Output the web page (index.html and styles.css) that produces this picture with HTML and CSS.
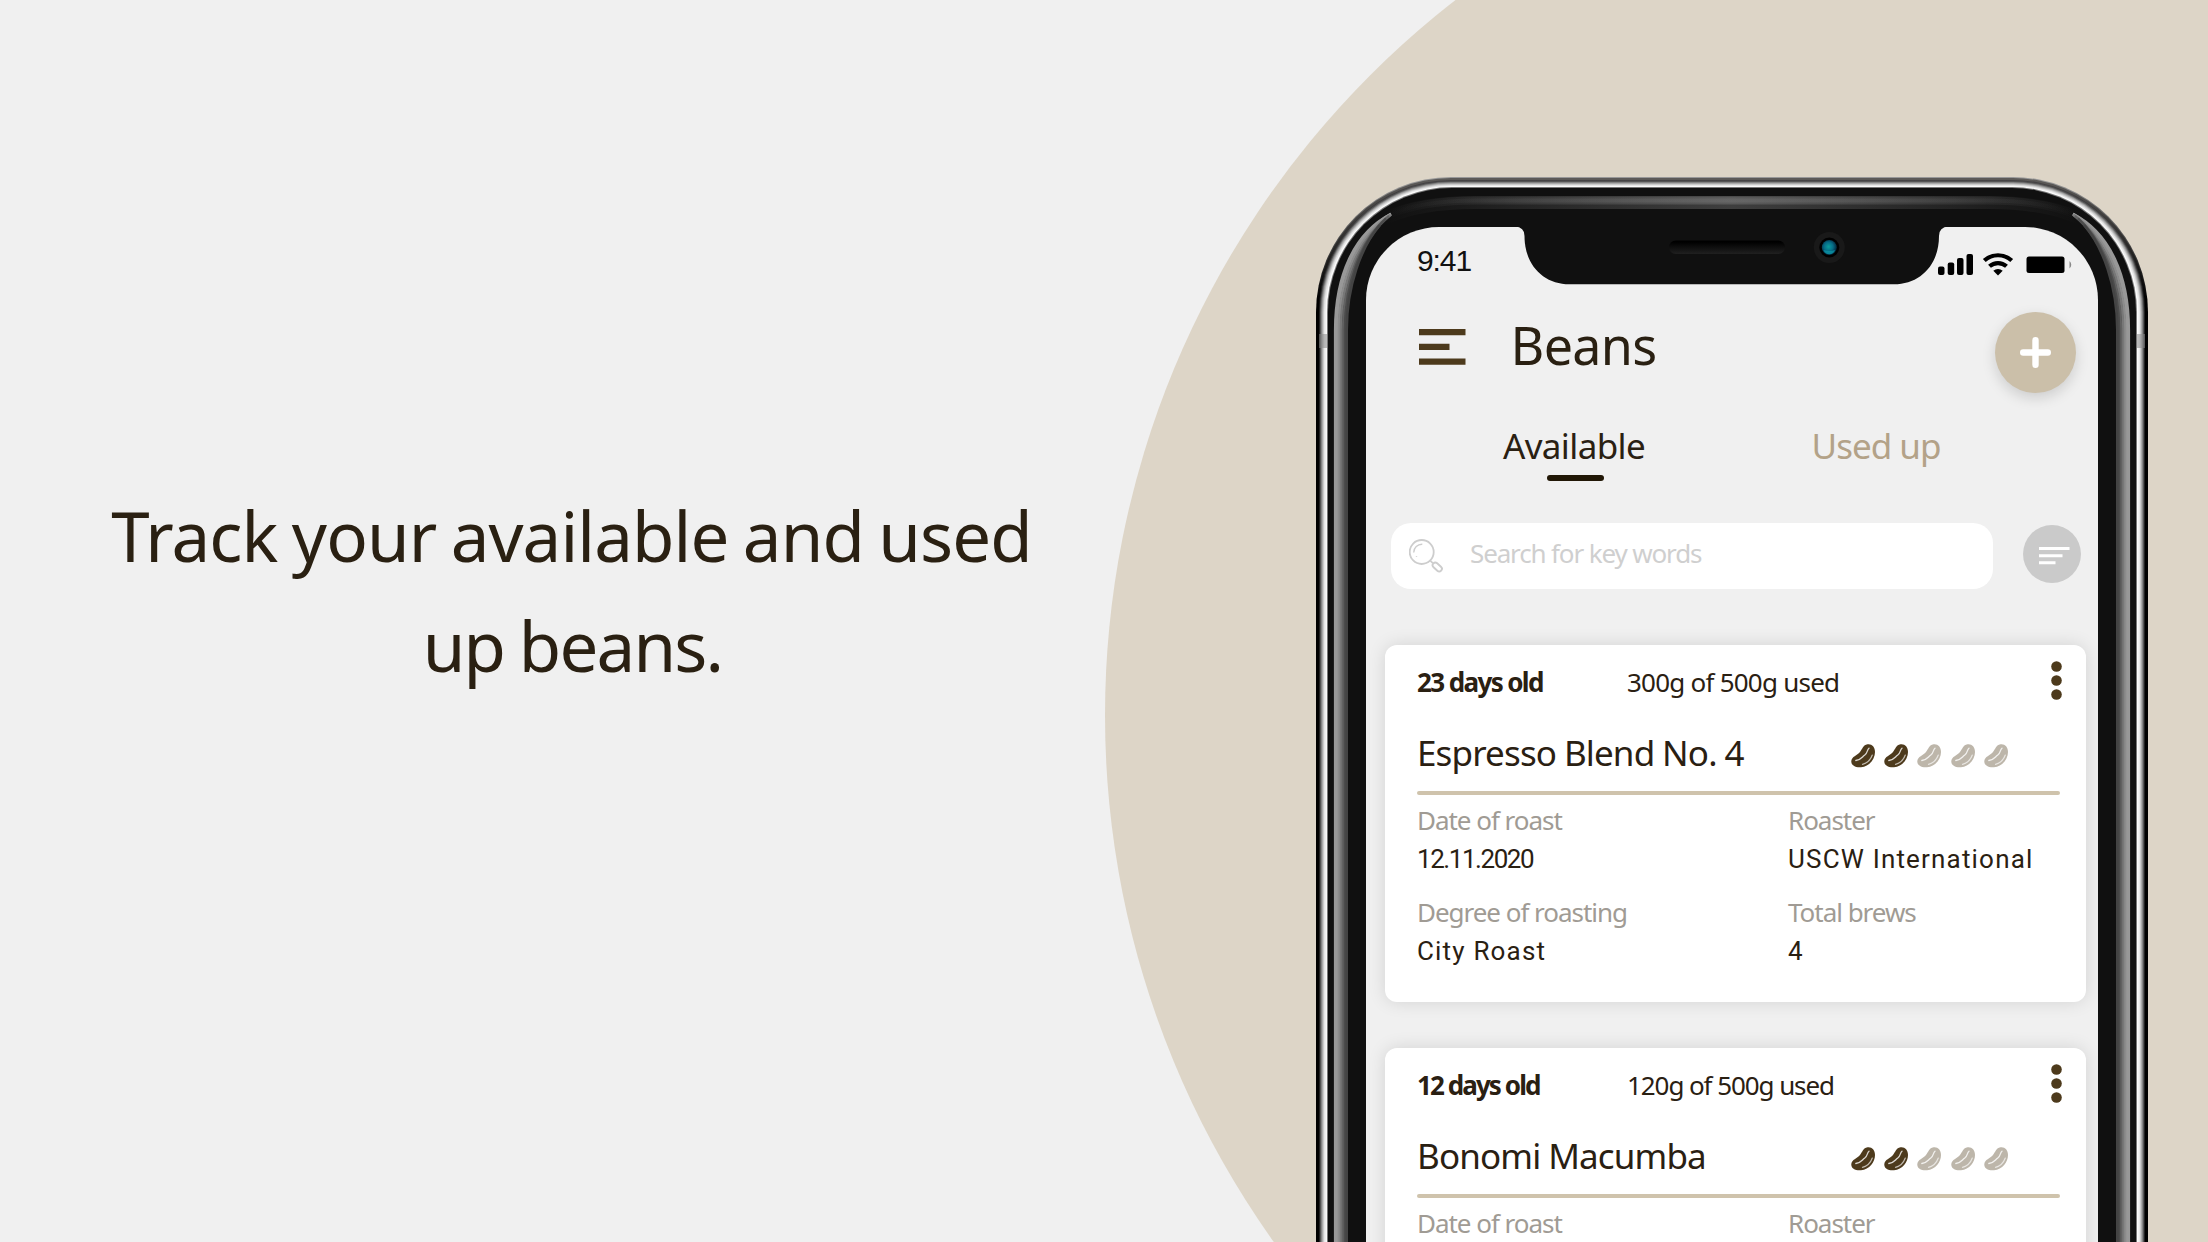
FILE: index.html
```
<!DOCTYPE html>
<html lang="en">
<head>
<meta charset="utf-8">
<title>Beans</title>
<link rel="stylesheet" href="styles.css">
</head>
<body>
<svg class="defs" width="0" height="0" aria-hidden="true">
  <symbol id="bean" viewBox="0 0 24 24">
    <path fill="currentColor" d="M16.500.3C20.500-.4 24 2.500 24 8c0 7-5.500 14.500-14 15.300C4 23.800 0 21 .3 17 .8 12.500 6 11.500 9 8c2.500-3 3-7 7.500-7.700z"/>
    <path fill="none" stroke="#fff" stroke-opacity=".8" stroke-width="1.300" stroke-linecap="round" d="M18 4.200c-2.200 1.600-1.200 4.800-4.200 6.800s-3 4.500-9 5.500"/>
    <path fill="none" stroke="#fff" stroke-opacity=".65" stroke-width="1.200" stroke-linecap="round" d="M21.300 11c-1.600 4.400-4.800 8-9.800 9.400"/>
  </symbol>
  <symbol id="dots" viewBox="0 0 11 39">
    <g fill="#4d3a1c"><circle cx="5.500" cy="5.500" r="5.300"/><circle cx="5.500" cy="19.500" r="5.300"/><circle cx="5.500" cy="33.500" r="5.300"/></g>
  </symbol>
</svg>

<main class="stage">
  <div class="backdrop"></div>
  <h1 class="headline"><span class="line first">Track your available and used</span><span class="line second">up beans.</span></h1>

  <section class="phone">
    <svg class="frame" width="832" height="1065" viewBox="1316 177 832 1065">
      <defs>
        <linearGradient id="e0" gradientUnits="userSpaceOnUse" x1="0" y1="180" x2="0" y2="300"><stop stop-color="#999"/><stop offset="1" stop-color="#000"/></linearGradient>
        <linearGradient id="e1" gradientUnits="userSpaceOnUse" x1="0" y1="180" x2="0" y2="300"><stop stop-color="#5c5a58"/><stop offset="1" stop-color="#000"/></linearGradient>
        <linearGradient id="e3" gradientUnits="userSpaceOnUse" x1="0" y1="180" x2="0" y2="300"><stop stop-color="#454345"/><stop offset="1" stop-color="#222"/></linearGradient>
        <linearGradient id="topSheen" gradientUnits="userSpaceOnUse" x1="1385" y1="0" x2="2079" y2="0"><stop stop-color="#777" stop-opacity="0"/><stop offset=".18" stop-color="#777" stop-opacity=".4"/><stop offset=".5" stop-color="#777"/><stop offset=".82" stop-color="#777" stop-opacity=".4"/><stop offset="1" stop-color="#777" stop-opacity="0"/></linearGradient>
        <g id="sideSheen" fill="none" stroke-width="2.600">
          <path stroke="#999" d="M1391 214C1354 233 1335.200 276 1335.200 330V1250"/>
          <path stroke="#989898" d="M1391 214C1356 234 1337 277 1337 330V1250"/>
          <path stroke="#8c8c8c" d="M1391 214.500C1358 235 1339 278 1339 330V1250"/>
          <path stroke="#787878" d="M1390.500 215C1360 237 1341 279 1341 330V1250"/>
          <path stroke="#626262" d="M1389 216C1361 239 1343 281 1343 330V1250"/>
          <path stroke="#4c4c4c" d="M1386 218.500C1361 242 1345 283 1345 330V1250"/>
          <path stroke="#444" d="M1380 225C1361 247 1346.700 286 1346.700 330V1250"/>
        </g>
      </defs>
      <rect x="1316" y="177" width="832" height="1400" rx="135" fill="url(#e0)"/>
      <rect x="1317" y="178" width="830" height="1400" rx="134" fill="url(#e1)"/>
      <rect x="1319" y="180" width="826" height="1400" rx="132" fill="url(#e3)"/>
      <rect x="1320" y="181" width="824" height="1400" rx="131" fill="#555"/>
      <rect x="1321" y="182" width="822" height="1400" rx="130" fill="#848484"/>
      <rect x="1322" y="183" width="820" height="1400" rx="129" fill="#aaa"/>
      <rect x="1323" y="184" width="818" height="1400" rx="128" fill="#ccc"/>
      <rect x="1324" y="185" width="816" height="1400" rx="127" fill="#e8e8e8"/>
      <rect x="1325.500" y="186" width="813" height="1400" rx="126" fill="#fafafa"/>
      <rect x="1327" y="187" width="810" height="1400" rx="125" fill="#777"/>
      <rect x="1328" y="188" width="808" height="1400" rx="124" fill="#101010"/>
      <path d="M1319 334h8v14h-8zM2137 334h8v14h-8z" fill="#888" opacity=".55"/>
      <g fill="none" stroke="url(#topSheen)">
        <path stroke-width="13" opacity=".45" d="M1385 218Q1420 202.500 1475 202.500H1989Q2044 202.500 2079 218"/>
        <path stroke-width="8" opacity=".5" d="M1385 216Q1420 200.500 1475 200.500H1989Q2044 200.500 2079 216"/>
        <path stroke-width="4" opacity=".4" d="M1385 216Q1420 200.500 1475 200.500H1989Q2044 200.500 2079 216"/>
      </g>
      <use href="#sideSheen"/>
      <use href="#sideSheen" transform="translate(3464 0) scale(-1 1)"/>
    </svg>

    <div class="screen">
      <div class="status">
        <span class="time">9:41</span>
        <svg width="134" height="24" viewBox="0 0 134 24">
          <rect x="0" y="14.500" width="6.500" height="8.500" rx="2"/><rect x="9.700" y="10.500" width="6.500" height="12.500" rx="2"/><rect x="19" y="6" width="6.500" height="17" rx="2"/><rect x="28.500" y="2" width="6.500" height="21" rx="2"/>
          <g fill="none" stroke="#000" stroke-width="4.200"><path d="M46.300 8.500a20.500 20.500 0 0 1 27.400 0"/><path d="M51.500 14.300a12.700 12.700 0 0 1 17 0"/></g>
          <path d="M55.300 18.700a7 7 0 0 1 9.400 0L60 23.400z"/>
          <rect x="88.500" y="4.500" width="38" height="16.500" rx="2.500"/>
          <path fill="#888" d="M131.500 9q3.500 3.500 0 7.500z"/>
        </svg>
      </div>

      <header class="topbar">
        <svg class="burger" width="47" height="37" viewBox="0 0 47 37"><path fill="#4d3a1c" d="M0 0h46.500v6.300H0zM0 14.700h30.500V21H0zM0 29.500h46.500v6.300H0z"/></svg>
        <h2>Beans</h2>
        <button class="add"><svg width="31" height="31" viewBox="0 0 31 31"><path d="M15.500 3.200v24.600M3.200 15.500h24.600" stroke="#fff" stroke-width="6.400" stroke-linecap="round"/></svg></button>
      </header>

      <nav class="tabs">
        <a class="tab active">Available</a>
        <a class="tab">Used up</a>
      </nav>

      <div class="search">
        <div class="field">
          <svg width="34" height="34" viewBox="0 0 34 34" fill="none" stroke="#cdcdcd"><circle cx="12.700" cy="13" r="12" stroke-width="1.800"/><path stroke-width="1.400" d="M4.700 13.500a8.300 8.300 0 0 1 8.600-8.300M7.500 17v.8"/><path stroke-width="1.700" d="M21.300 21.700l2.500 2.500"/><rect x="23" y="25.300" width="10.500" height="5.400" rx="2.700" transform="rotate(42 28.250 28)" stroke-width="1.900"/></svg>
          <span>Search for key words</span>
        </div>
        <button class="filter"><svg width="31" height="18" viewBox="0 0 31 18"><path fill="#fff" d="M0 0h30.500v3H0zM0 7.200h23.500v3H0zM0 14.200h16.500v3H0z"/></svg></button>
      </div>

      <div class="cards">
        <article class="card">
          <div class="meta"><b>23 days old</b><span>300g of 500g used</span><svg class="more" width="11" height="39"><use href="#dots"/></svg></div>
          <div class="name"><h3>Espresso Blend No. 4</h3>
            <div class="rating"><svg class="on"><use href="#bean"/></svg><svg class="on"><use href="#bean"/></svg><svg><use href="#bean"/></svg><svg><use href="#bean"/></svg><svg><use href="#bean"/></svg></div>
          </div>
          <dl class="facts">
            <div><dt>Date of roast</dt><dd class="date">12.11.2020</dd></div>
            <div><dt>Roaster</dt><dd>USCW International</dd></div>
            <div><dt>Degree of roasting</dt><dd>City Roast</dd></div>
            <div><dt>Total brews</dt><dd>4</dd></div>
          </dl>
        </article>
        <article class="card">
          <div class="meta"><b class="tight">12 days old</b><span class="tight">120g of 500g used</span><svg class="more" width="11" height="39"><use href="#dots"/></svg></div>
          <div class="name"><h3>Bonomi Macumba</h3>
            <div class="rating"><svg class="on"><use href="#bean"/></svg><svg class="on"><use href="#bean"/></svg><svg><use href="#bean"/></svg><svg><use href="#bean"/></svg><svg><use href="#bean"/></svg></div>
          </div>
          <dl class="facts">
            <div><dt>Date of roast</dt></div>
            <div><dt>Roaster</dt></div>
          </dl>
        </article>
      </div>
    </div>

    <svg class="notch" width="832" height="120" viewBox="1316 177 832 120">
      <defs>
        <linearGradient id="spk" x1="0" y1="0" x2="0" y2="1"><stop offset=".1" stop-color="#000"/><stop offset="1" stop-color="#202020"/></linearGradient>
        <radialGradient id="lens" cx=".45" cy=".45" r=".6"><stop stop-color="#0a9c9c"/><stop offset=".5" stop-color="#066b86"/><stop offset="1" stop-color="#03182c"/></radialGradient>
      </defs>
      <path fill="#101010" d="M1515 226.500q9.500.5 9.500 9.500c0 29 19 48.300 45 48.300H1894c26 0 45-19.300 45-48.300q0-9 9.500-9.500z"/>
      <rect x="1669" y="240.500" width="116" height="13.500" rx="6.700" fill="url(#spk)"/>
      <circle cx="1829.300" cy="247.500" r="15.500" fill="#191919"/>
      <circle cx="1829.300" cy="247.500" r="10" fill="#000"/>
      <circle cx="1829.300" cy="247.500" r="7.500" fill="url(#lens)"/>
      <path d="M1823.500 250q6 2 11.500 0-1 4-5.800 4.300-4.500-.3-5.700-4.300z" fill="#0b94a6" opacity=".8"/>
    </svg>
  </section>
</main>
</body>
</html>
```
FILE: styles.css
```
* { box-sizing: border-box; margin: 0; padding: 0; }

body {
  width: 2208px;
  height: 1242px;
  overflow: hidden;
  background: #f0f0f0;
  color: #2a2012;
  font-family: "Noto Sans", sans-serif;
}

.defs { position: absolute; }

.stage {
  position: relative;
  display: flex;
  width: 2208px;
  height: 1242px;
  overflow: hidden;
}

.backdrop {
  position: absolute;
  left: 1104.5px;
  top: -190.5px;
  width: 1811px;
  height: 1811px;
  border-radius: 50%;
  background: #ddd5c7;
}

.headline {
  position: relative;
  width: 1140px;
  padding: 480px 0 0 3px;
  font-size: 69px;
  font-weight: 400;
  line-height: 110px;
  text-align: center;
  white-space: nowrap;
}
.line { display: block; }
.first { letter-spacing: -.9px; word-spacing: -2.7px; }
.second { padding-left: 2px; letter-spacing: -1.8px; word-spacing: -1.5px; }

/* Phone */
.phone {
  position: relative;
  flex: none;
  width: 832px;
  height: 1065px;
  margin: 177px 0 0 176px;
  padding: 50px 50px 0;
}
.frame, .notch { position: absolute; left: 0; top: 0; }

.screen {
  position: relative;
  height: 1015px;
  overflow: hidden;
  border-radius: 73px 73px 0 0;
  background: #f0f0f0;
}

.status {
  display: flex;
  justify-content: space-between;
  height: 57px;
  padding: 0 26px 0 51px;
}
.status svg { margin-top: 25px; }
.time {
  color: #111;
  font: 30px/67px "Liberation Sans", sans-serif;
  letter-spacing: -1.1px;
}

.topbar {
  display: flex;
  align-items: flex-start;
  margin-top: 28px;
  padding: 0 22px 0 53px;
}
.burger { margin-top: 17px; }
.topbar h2 {
  flex: 1;
  margin: 3px 0 0 44.5px;
  font-size: 52px;
  font-weight: 400;
  line-height: 60px;
  letter-spacing: -.65px;
}
button { display: flex; border: 0; border-radius: 50%; }
.add {
  width: 81px;
  height: 81px;
  align-items: center;
  justify-content: center;
  background: #cbbfa9;
  box-shadow: 0 5px 14px rgba(0, 0, 0, .15);
}

.tabs {
  display: grid;
  grid-template-columns: 302px 302px;
  margin-top: 30px;
  padding-left: 57px;
}
.tab {
  height: 58px;
  color: #b3a288;
  font-size: 35px;
  line-height: 46px;
  letter-spacing: -1px;
  text-align: center;
}
.active { color: #2a2012; letter-spacing: -.63px; }
.active::after {
  content: "";
  display: block;
  width: 57px;
  height: 6px;
  margin: 6px auto 0;
  border-radius: 3px;
  background: #211706;
  transform: translateX(1px);
}

.search {
  display: flex;
  align-items: center;
  gap: 29.5px;
  margin-top: 42px;
  padding-left: 25px;
}
.field {
  display: flex;
  gap: 27px;
  width: 602px;
  height: 66px;
  padding-left: 18px;
  border-radius: 20px;
  background: #fff;
  color: #cfcfcf;
  font-size: 26px;
  line-height: 61px;
  letter-spacing: -1.14px;
}
.field svg { margin-top: 16px; }
.filter {
  width: 58.5px;
  height: 58.5px;
  margin-top: -4px;
  padding: 22px 0 0 16px;
  background: #cacaca;
}

/* Bean cards */
.cards {
  display: flex;
  flex-direction: column;
  gap: 46px;
  margin-top: 56px;
  padding-left: 19px;
}
.card {
  width: 700.5px;
  height: 357px;
  padding-left: 32px;
  border-radius: 12px;
  background: #fff;
  box-shadow: 0 0 18px rgba(0, 0, 0, .12);
}
.meta {
  display: grid;
  grid-template-columns: 210px 1fr 11px;
  height: 72px;
  padding-right: 24px;
  font-size: 26px;
  line-height: 74px;
}
.meta b { letter-spacing: -1.62px; }
.meta span { letter-spacing: -.77px; }
.meta b.tight { letter-spacing: -1.92px; }
.meta span.tight { letter-spacing: -1.08px; }
.more { margin-top: 15.5px; }

.name {
  display: flex;
  justify-content: space-between;
  width: 643px;
  height: 78px;
  padding-right: 52px;
  position: relative;
}
.name::after {
  content: "";
  position: absolute;
  left: 0;
  right: 0;
  bottom: 0;
  height: 4px;
  border-radius: 2px;
  background: #cfc3ac;
}
.name h3 {
  font-size: 35px;
  font-weight: 400;
  line-height: 71px;
  letter-spacing: -.85px;
  word-spacing: -.5px;
  white-space: nowrap;
}
.rating { display: flex; gap: 9.3px; margin-top: 27px; }
.rating svg { width: 24px; height: 24px; color: #bdb6aa; }
.rating .on { color: #4d3a1c; }

.facts {
  display: grid;
  grid-template-columns: 371px 1fr;
  row-gap: 14px;
  margin-top: 6px;
  font-size: 26px;
}
dt { color: #a09b94; line-height: 38px; letter-spacing: -1.03px; }
dd { font-family: Roboto, sans-serif; line-height: 40px; letter-spacing: 1.18px; }
.date { letter-spacing: -1.44px; }
```
